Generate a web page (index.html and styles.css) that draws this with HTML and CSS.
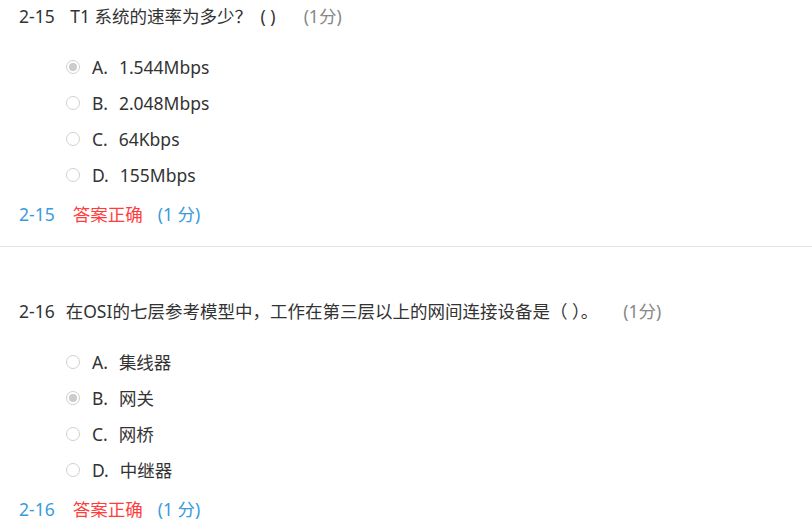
FILE: index.html
```html
<!DOCTYPE html>
<html>
<head>
    <title>题目</title>
    <meta charset="UTF-8">
    <link rel="stylesheet" href="styles.css">
</head>
<body>
    <div class="pregunta">
        <div class="titulo"><span class="num">2-15</span>&nbsp;T1 系统的速率为多少？ <span class="hueco">( )</span><span class="puntos">(1分)</span></div>
        <ul class="opciones">
            <li><span class="radio marcada"></span>A.<span class="texto">1.544Mbps</span></li>
            <li><span class="radio"></span>B.<span class="texto">2.048Mbps</span></li>
            <li><span class="radio"></span>C.<span class="texto">64Kbps</span></li>
            <li><span class="radio"></span>D.<span class="texto">155Mbps</span></li>
        </ul>
        <div class="resultado"><span class="num">2-15</span><span class="correcto">答案正确</span>(1 分)</div>
    </div>
    <div class="pregunta">
        <div class="titulo"><span class="num">2-16</span>在OSI的七层参考模型中，工作在第三层以上的网间连接设备是（ ）。<span class="puntos final">(1分)</span></div>
        <ul class="opciones">
            <li><span class="radio"></span>A.<span class="texto">集线器</span></li>
            <li><span class="radio marcada"></span>B.<span class="texto">网关</span></li>
            <li><span class="radio"></span>C.<span class="texto">网桥</span></li>
            <li><span class="radio"></span>D.<span class="texto">中继器</span></li>
        </ul>
        <div class="resultado"><span class="num">2-16</span><span class="correcto">答案正确</span>(1 分)</div>
    </div>
</body>
</html>
```
FILE: styles.css
```css
body{
    margin: 0;
    background-color: #ffffff;
    font-family: "Noto Sans", "Noto Sans CJK SC", sans-serif;
    font-size: 17.5px;
    color: #333333;
}

.pregunta{
    padding: 0 0 0 19px;
}

.pregunta + .pregunta{
    border-top: 1px solid #e5e5e5;
    margin-top: 14px;
    padding-top: 48px;
}

.titulo{
    height: 32px;
    line-height: 32px;
    white-space: nowrap;
}

.titulo .num{
    margin-right: 11px;
}

.titulo .hueco{
    margin-left: 4px;
}

.titulo .puntos{
    color: #888888;
    margin-left: 28px;
}

.titulo .puntos.final{
    margin-left: 25px;
}

.opciones{
    list-style: none;
    margin: 17px 0 0 0;
    padding: 0 0 0 47px;
}

.opciones li{
    height: 36px;
    line-height: 36px;
    display: flex;
    align-items: center;
}

.opciones .radio{
    width: 12px;
    height: 12px;
    border: 1px solid #d0d0d0;
    border-radius: 50%;
    margin-right: 12px;
    position: relative;
}

.opciones .radio.marcada::after{
    content: "";
    position: absolute;
    left: 2px;
    top: 2px;
    width: 8px;
    height: 8px;
    border-radius: 50%;
    background-color: #cccccc;
}

.opciones .texto{
    margin-left: 11px;
}

.resultado{
    margin-top: 3px;
    height: 36px;
    line-height: 36px;
    color: #3a9bdc;
}

.resultado .num{
    margin-right: 18px;
}

.resultado .correcto{
    color: #ff3d3d;
    margin-right: 15px;
}
```
